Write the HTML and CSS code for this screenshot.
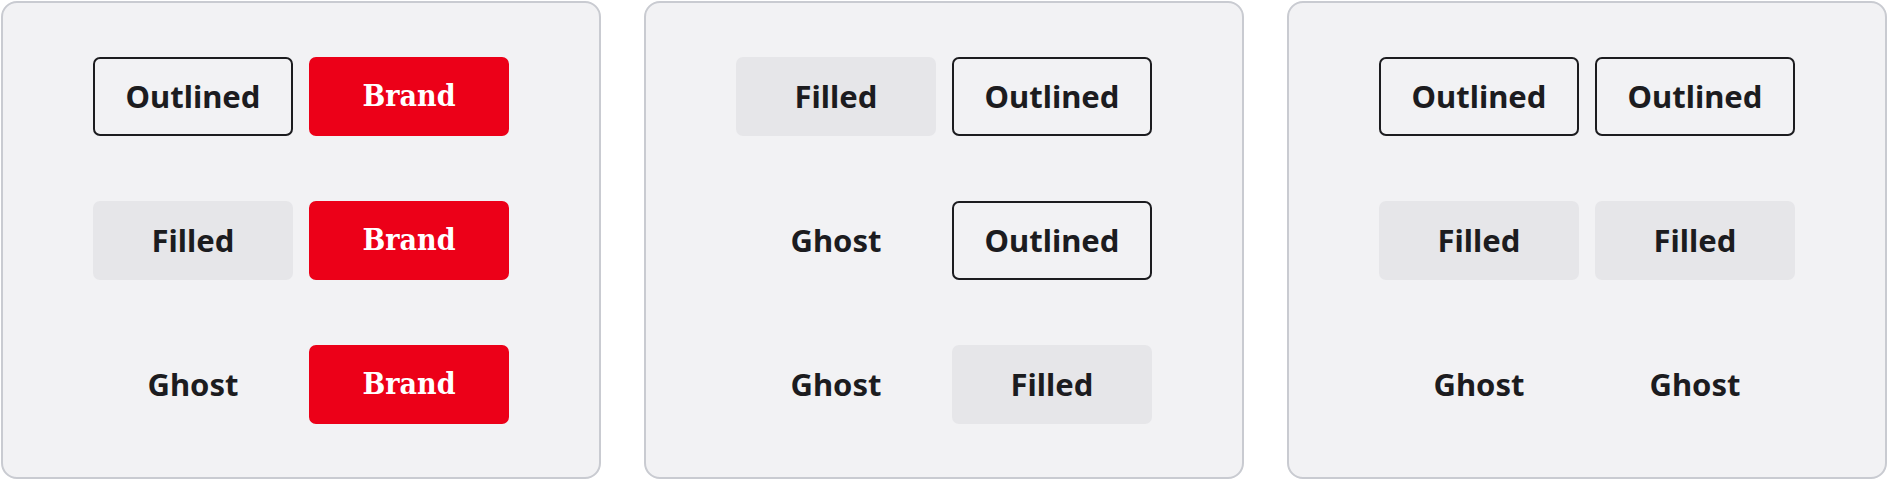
FILE: index.html
```html
<!DOCTYPE html>
<html lang="en">
<head>
<meta charset="utf-8">
<title>Buttons</title>
<link rel="stylesheet" href="styles.css">
</head>
<body>
<div class="row">
  <section class="panel">
    <div class="grid">
      <button class="btn outlined">Outlined</button>
      <button class="btn brand">Brand</button>
      <button class="btn filled">Filled</button>
      <button class="btn brand">Brand</button>
      <button class="btn ghost">Ghost</button>
      <button class="btn brand">Brand</button>
    </div>
  </section>
  <section class="panel">
    <div class="grid">
      <button class="btn filled">Filled</button>
      <button class="btn outlined">Outlined</button>
      <button class="btn ghost">Ghost</button>
      <button class="btn outlined">Outlined</button>
      <button class="btn ghost">Ghost</button>
      <button class="btn filled">Filled</button>
    </div>
  </section>
  <section class="panel">
    <div class="grid">
      <button class="btn outlined">Outlined</button>
      <button class="btn outlined">Outlined</button>
      <button class="btn filled">Filled</button>
      <button class="btn filled">Filled</button>
      <button class="btn ghost">Ghost</button>
      <button class="btn ghost">Ghost</button>
    </div>
  </section>
</div>
</body>
</html>
```
FILE: styles.css
```css
html, body {
  margin: 0;
  padding: 0;
  background: #ffffff;
}
body {
  width: 1888px;
  height: 480px;
  font-family: "Noto Sans", "DejaVu Sans", sans-serif;
}
.row {
  display: flex;
  gap: 43px;
  padding: 1px;
  height: 480px;
  box-sizing: border-box;
}
.panel {
  flex: 1;
  box-sizing: border-box;
  border: 2px solid #c9cbd1;
  border-radius: 16px;
  background: #f2f2f4;
  display: flex;
  align-items: center;
  justify-content: center;
}
.grid {
  display: grid;
  grid-template-columns: 200px 200px;
  grid-auto-rows: 79px;
  column-gap: 16px;
  row-gap: 65px;
}
.btn {
  box-sizing: border-box;
  margin: 0;
  padding: 0;
  border: 2px solid transparent;
  border-radius: 7px;
  background: transparent;
  color: #1c1c1f;
  font-family: "Noto Sans", "DejaVu Sans", sans-serif;
  font-weight: 700;
  font-size: 31px;
  line-height: 1;
  display: flex;
  align-items: center;
  justify-content: center;
}
.outlined {
  border-color: #1c1c1f;
}
.filled {
  background: #e6e6e9;
  border-color: #e6e6e9;
}
.ghost {
  background: transparent;
}
.brand {
  background: #ec0018;
  border-color: #ec0018;
  color: #ffffff;
  font-family: "DejaVu Serif", "Liberation Serif", serif;
  font-stretch: condensed;
  font-size: 30px;
}
```
